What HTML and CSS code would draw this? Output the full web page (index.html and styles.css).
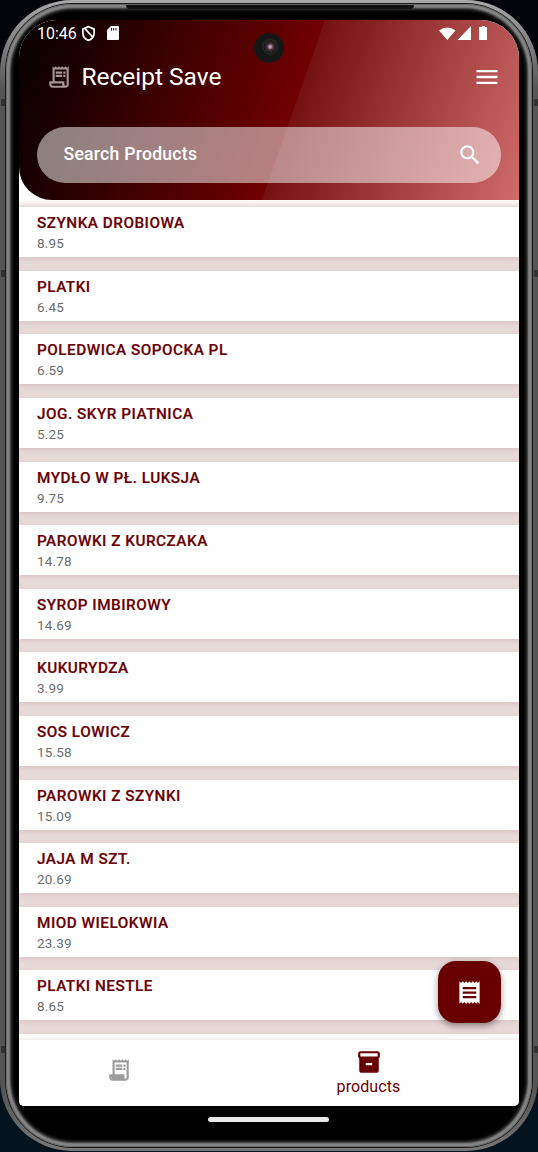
FILE: index.html
```
<!DOCTYPE html>
<html lang="en">
<head>
<meta charset="utf-8">
<title>Receipt Save</title>
<link rel="stylesheet" href="styles.css">
</head>
<body>
<svg class="defs" width="0" height="0">
  <symbol id="receipt-long" viewBox="0 0 24 24"><path d="M19.5 3.5 18 2l-1.500 1.500L15 2l-1.500 1.500L12 2l-1.500 1.500L9 2 7.500 3.500 6 2v14H3v3c0 1.660 1.340 3 3 3h12c1.660 0 3-1.340 3-3V2l-1.500 1.500zM15 20H6c-.55 0-1-.45-1-1v-1h10v2zm4-1c0 .55-.45 1-1 1s-1-.45-1-1v-3H8V5h11v14z"/><path d="M9 7h6v2H9zm7 0h2v2h-2zM9 10h6v2H9zm7 0h2v2h-2z"/></symbol>
</svg>
<div class="phone">
  <div class="rim"><div class="bezel">
    <main class="screen">
      <header class="header">
        <div class="status">
          <span class="clock">10:46</span>
          <svg class="shield" viewBox="0 0 24 26"><path d="M12 2 3 6v6c0 5.500 3.800 10 9 12 5.200-2 9-6.500 9-12V6zM7 6l12 13" fill="none" stroke="#fff" stroke-width="2.700"/></svg>
          <svg class="sd" viewBox="0 0 12 14"><path fill="#fff" d="M4 0h7a1 1 0 0 1 1 1v12a1 1 0 0 1-1 1H1a1 1 0 0 1-1-1V4z"/><path d="M4 2h1v2.500H4zm2.200 0h1v2.500h-1zm2.300 0h1v2.500h-1z" fill="#400"/></svg>
          <svg class="signals" viewBox="0 0 50 16"><path fill="#fff" d="M0 4.500Q8.300-1.500 16.500 4.500L8.300 14zM18.500 14 32 0v14zM41 1h2V0h3v1h2v13h-8V1z"/></svg>
        </div>
        <div class="titlebar">
          <svg class="logo"><use href="#receipt-long"/></svg>
          <h1>Receipt Save</h1>
          <svg class="menu" viewBox="0 0 24 24"><path d="M3 18h18v-2H3zm0-5h18v-2H3zm0-7v2h18V6z"/></svg>
        </div>
        <div class="search">
          <span>Search Products</span>
          <svg viewBox="0 0 24 24"><path d="M15.500 14h-.79l-.28-.27A6.470 6.470 0 0 0 16 9.500 6.500 6.500 0 1 0 9.500 16c1.610 0 3.090-.59 4.230-1.570l.27.28v.79l5 4.990L20.490 19zm-6 0C7.010 14 5 11.990 5 9.500S7.010 5 9.500 5 14 7.010 14 9.500 11.990 14 9.500 14z"/></svg>
        </div>
      </header>
      <section class="list">
        <article><h2>SZYNKA DROBIOWA</h2><p>8.95</p></article>
        <article><h2>PLATKI</h2><p>6.45</p></article>
        <article><h2>POLEDWICA SOPOCKA PL</h2><p>6.59</p></article>
        <article><h2>JOG. SKYR PIATNICA</h2><p>5.25</p></article>
        <article><h2>MYDŁO W PŁ. LUKSJA</h2><p>9.75</p></article>
        <article><h2>PAROWKI Z KURCZAKA</h2><p>14.78</p></article>
        <article><h2>SYROP IMBIROWY</h2><p>14.69</p></article>
        <article><h2>KUKURYDZA</h2><p>3.99</p></article>
        <article><h2>SOS LOWICZ</h2><p>15.58</p></article>
        <article><h2>PAROWKI Z SZYNKI</h2><p>15.09</p></article>
        <article><h2>JAJA M SZT.</h2><p>20.69</p></article>
        <article><h2>MIOD WIELOKWIA</h2><p>23.39</p></article>
        <article><h2>PLATKI NESTLE</h2><p>8.65</p></article>
        <article></article>
      </section>
      <nav class="nav">
        <div class="tab"><svg viewBox="0 0 24 24"><use href="#receipt-long" width="24" height="24"/><path d="M4.500 17.500h11.500v3H6z"/></svg></div>
        <div class="tab active">
          <svg viewBox="0 0 24 24"><path fill-rule="evenodd" d="M20 2H4c-1 0-2 .9-2 2v3.010c0 .72.430 1.340 1 1.690V20c0 1.100 1.100 2 2 2h14c.9 0 2-.9 2-2V8.700c.57-.35 1-.97 1-1.690V4c0-1.100-1-2-2-2zm-5 13H9v-2h6zM20 7H4V4h16z"/></svg>
          <span>products</span>
        </div>
      </nav>
      <button class="fab" aria-label="Receipts"><svg viewBox="0 0 24 24"><path d="M18 17H6v-2h12zm0-4H6v-2h12zm0-4H6V7h12zM3 22l1.500-1.500L6 22l1.500-1.500L9 22l1.500-1.500L12 22l1.500-1.500L15 22l1.500-1.500L18 22l1.500-1.500L21 22V2l-1.500 1.500L18 2l-1.500 1.500L15 2l-1.500 1.500L12 2l-1.500 1.500L9 2 7.500 3.500 6 2 4.500 3.500 3 2z"/></svg></button>
    </main>
    <div class="home"></div>
  </div></div>
  <div class="speaker"></div>
  <div class="camera"></div>
  <i class="seam left upper"></i><i class="seam left middle"></i><i class="seam left lower"></i>
  <i class="seam right upper"></i><i class="seam right middle"></i><i class="seam right lower"></i>
</div>
</body>
</html>
```
FILE: styles.css
```
* { box-sizing: border-box; margin: 0; padding: 0; }
body { width: 538px; height: 1152px; overflow: hidden; background: linear-gradient(#03050a, #020408 50%, #03141f); font-family: Roboto, sans-serif; }
.defs { position: absolute; }
svg { display: block; flex: none; }
.phone { position: relative; width: 538px; height: 1151px; padding: 3px 5px; border-radius: 72px; background: linear-gradient(#aaa, #555 90px, #555 1090px, #777); }
.rim { height: 1145px; padding: 1px; border-radius: 68px; background: #191919; }
.bezel { height: 1143px; border-radius: 67px; padding: 16px 13px 0; background: #000; box-shadow: inset 0 0 1px 1px #666, inset 0 0 2px 4px #8a8a8a, inset 0 0 3px 6px #333; }
.screen { position: relative; width: 500px; height: 1086px; overflow: hidden; border-radius: 38px 38px 5px 5px; background: #fff; display: flex; flex-direction: column; }
.header { height: 180px; flex: none; padding: 0 18px; border-radius: 0 0 0 33px; color: #fff; fill: #fff; background: linear-gradient(109.300deg, #080000 0%, #160000 10%, #700000 54.200%, #741212 54.500%, #cf6b6b 100%); }
.status { display: flex; align-items: center; height: 26px; }
.clock { width: 44px; font-size: 16px; letter-spacing: 0; }
.shield { width: 15px; height: 17px; }
.sd { width: 12px; height: 14px; margin-left: 11px; }
.signals { width: 50px; height: 16px; margin: 1px 12px 0 auto; }
.titlebar { display: flex; align-items: center; height: 62px; }
.logo { width: 26px; height: 26px; margin-left: 9px; fill: #a49494; }
.titlebar h1 { margin-left: 9.500px; font-size: 24.500px; font-weight: 400; line-height: 32px; letter-spacing: -.02px; }
.menu { width: 28px; height: 28px; margin-left: auto; }
.search { width: 464px; height: 56px; margin-top: 18.500px; padding: 0 18px 0 26.500px; display: flex; align-items: center; justify-content: space-between; border-radius: 28px; background: rgba(255,255,255,.5); font-size: 17.600px; font-weight: 500; letter-spacing: .25px; }
.search span { margin-top: -1px; }
.search svg { width: 26px; height: 26px; }
.list { flex: 1; min-height: 0; overflow: hidden; padding-top: 7.300px; display: flex; flex-direction: column; gap: 13.600px; background: linear-gradient(#fff, #e8d9d9 8px); }
.list article { flex: none; height: 50px; padding: 6px 18px 0; background: #fff; box-shadow: 0 2px 5px rgba(100,0,0,.1); }
.list h2 { height: 20px; font-size: 15.300px; line-height: 20px; font-weight: 500; letter-spacing: .5px; color: #690003; -webkit-text-stroke: .2px #690003; }
.list p { height: 20px; font-size: 13.500px; line-height: 21px; letter-spacing: .15px; color: #6d6d6d; }
.nav { position: relative; height: 66px; flex: none; display: flex; background: #fff; box-shadow: 0 -1px 3px rgba(0,0,0,.1); }
.tab { width: 50%; display: flex; flex-direction: column; align-items: center; justify-content: center; fill: #9c9c9c; }
.tab svg { width: 26px; height: 26px; margin-right: 51px; margin-top: -7px; }
.tab.active { justify-content: flex-start; padding: 9px 0 0; fill: #690000; color: #690000; }
.tab.active svg { margin: 0 51px 0 0; }
.tab.active span { margin: 2px 51px 0 0; font-size: 16px; line-height: 20px; letter-spacing: .1px; }
.fab { position: absolute; right: 18px; top: 941px; width: 63px; height: 62px; border: 0; border-radius: 18px; display: grid; place-items: center; background: #690000; fill: #fff; box-shadow: 0 3px 7px rgba(0,0,0,.4); }
.fab svg { width: 27px; height: 27px; }
.home { width: 121px; height: 5px; margin: 11px 0 0 189px; border-radius: 3px; background: #e9e9e9; }
.speaker { position: absolute; left: 126px; top: 5px; width: 288px; height: 4px; border-radius: 0 0 5px 5px; background: #111; }
.camera { position: absolute; left: 254px; top: 33px; width: 30px; height: 30px; border-radius: 50%; background: radial-gradient(circle at 54% 46%, #c69ab8 0 1px, #4a3337 3px, #17181b 6px, #292929 7px, #151515 9px, #171717 15px); }
.seam { position: absolute; width: 4px; height: 7px; background: #333; }
.left { left: 1px; }
.right { right: 0; }
.upper { top: 99px; }
.middle { top: 270px; }
.lower { top: 1046px; }
```
